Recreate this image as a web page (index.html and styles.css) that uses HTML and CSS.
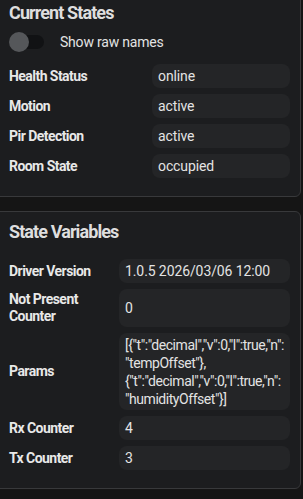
FILE: index.html
```html
<!DOCTYPE html>
<html lang="en">
<head>
    <meta charset="UTF-8">
    <meta name="viewport" content="width=device-width, initial-scale=1.0">
    <title>Device States</title>
    <link rel="stylesheet" href="styles.css">
</head>
<body>
    <section class="card card-states">
        <h2>Current States</h2>
        <label class="toggle-row">
            <span class="switch"><span class="knob"></span></span>
            Show raw names
        </label>
        <div class="attr-grid">
            <div class="attr-name">Health Status</div>
            <div class="attr-value">online</div>
            <div class="attr-name">Motion</div>
            <div class="attr-value">active</div>
            <div class="attr-name">Pir Detection</div>
            <div class="attr-value">active</div>
            <div class="attr-name">Room State</div>
            <div class="attr-value">occupied</div>
        </div>
    </section>

    <section class="card card-vars">
        <h2>State Variables</h2>
        <div class="attr-grid">
            <div class="attr-name">Driver Version</div>
            <div class="attr-value">1.0.5 2026/03/06 12:00</div>
            <div class="attr-name">Not Present Counter</div>
            <div class="attr-value">0</div>
            <div class="attr-name">Params</div>
            <div class="attr-value attr-json">
                <span>[{"t":"decimal","v":0,"l":true,"n":</span>
                <span>"tempOffset"},</span>
                <span>{"t":"decimal","v":0,"l":true,"n":</span>
                <span>"humidityOffset"}]</span>
            </div>
            <div class="attr-name">Rx Counter</div>
            <div class="attr-value">4</div>
            <div class="attr-name">Tx Counter</div>
            <div class="attr-value">3</div>
        </div>
    </section>
</body>
</html>
```

FILE: styles.css
```css
body {
    margin: 0;
    background: #151515;
    font-family: Roboto, "Liberation Sans", sans-serif;
    color: #e3e3e3;
    overflow: hidden;
}
.card {
    background: #1c1d1f;
    border: 1px solid #38393b;
    border-radius: 0 6px 6px 0;
    margin: 0 2px 0 -10px;
    padding: 8px 10px 18px 18px;
}
.card-states {
    margin-top: -8px;
}
.card-vars {
    margin-top: 14px;
}
h2 {
    margin: 0;
    font-size: 18px;
    line-height: 24px;
    font-weight: bold;
    letter-spacing: -0.9px;
    color: #dedede;
}
.toggle-row {
    display: flex;
    align-items: center;
    gap: 16px;
    height: 20px;
    margin-top: 7px;
    font-size: 14px;
    letter-spacing: -0.2px;
    cursor: pointer;
}
.switch {
    position: relative;
    display: block;
    width: 33px;
    height: 14px;
    margin-left: 2px;
    background: #111214;
    border-radius: 7px;
}
.knob {
    position: absolute;
    left: -2px;
    top: -3px;
    width: 20px;
    height: 20px;
    border-radius: 50%;
    background: #55575a;
}
.attr-grid {
    display: grid;
    grid-template-columns: 143px 1fr;
    row-gap: 6px;
    margin-top: 12px;
}
.card-vars .attr-grid {
    grid-template-columns: 110px 1fr;
    margin-top: 15px;
}
.attr-name {
    font-size: 14px;
    font-weight: bold;
    letter-spacing: -0.55px;
    line-height: 17px;
    padding: 2px 8px 2px 0;
    display: flex;
    align-items: center;
    color: #e8e8e8;
}
.attr-value {
    background: #242527;
    border-radius: 8px;
    padding: 3px 5px 3px 6px;
    font-size: 14px;
    line-height: 18px;
    letter-spacing: -0.1px;
    display: flex;
    align-items: center;
}
.attr-json {
    flex-direction: column;
    align-items: flex-start;
    padding-bottom: 2px;
    letter-spacing: -0.45px;
}
.attr-json span {
    white-space: nowrap;
}
```
